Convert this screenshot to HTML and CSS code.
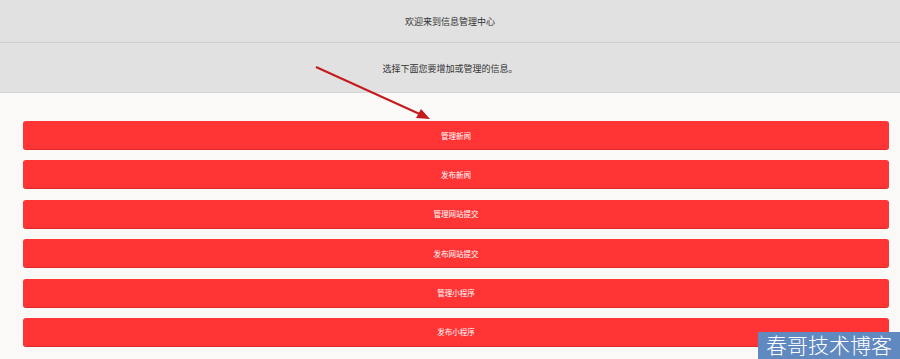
FILE: index.html
```html
<!DOCTYPE html>
<html lang="zh">
<head>
<meta charset="utf-8">
<title>信息管理中心</title>
<link rel="stylesheet" href="styles.css">
</head>
<body>
<header class="bar bar-title">欢迎来到信息管理中心</header>
<div class="bar bar-sub">选择下面您要增加或管理的信息。</div>
<main class="menu">
  <a class="btn" href="#">管理新闻</a>
  <a class="btn" href="#">发布新闻</a>
  <a class="btn" href="#">管理网站提交</a>
  <a class="btn" href="#">发布网站提交</a>
  <a class="btn" href="#">管理小程序</a>
  <a class="btn" href="#">发布小程序</a>
</main>
<svg class="arrow" width="900" height="359" viewBox="0 0 900 359">
  <line x1="316" y1="67" x2="424" y2="116" stroke="#c41a1e" stroke-width="2"/>
  <polygon points="430,119 416,118 421,109" fill="#c41a1e"/>
</svg>
<div class="watermark">春哥技术博客</div>
</body>
</html>
```
FILE: styles.css
```css
html, body {
  margin: 0;
  padding: 0;
}
body {
  width: 900px;
  height: 359px;
  overflow: hidden;
  background: #faf9f8;
  font-family: "Noto Sans CJK SC", "Noto Sans", sans-serif;
  position: relative;
}
.bar {
  background: #e1e1e1;
  color: #333;
  font-size: 9px;
  display: flex;
  align-items: center;
  justify-content: center;
}
.bar-title {
  height: 42px;
  border-bottom: 1px solid #cdcdcd;
}
.bar-sub {
  height: 48px;
  border-bottom: 1px solid #d6d6d6;
  padding-top: 1px;
}
.menu {
  display: flex;
  flex-direction: column;
  gap: 11.4px;
  padding: 28px 11px 0 23px;
}
.btn {
  display: flex;
  align-items: center;
  justify-content: center;
  height: 28px;
  background: #fe3435;
  border-radius: 3px;
  box-shadow: 0 1px 0 #e02a2b;
  color: #fff;
  font-size: 7.5px;
  text-decoration: none;
}
.arrow {
  position: absolute;
  left: 0;
  top: 0;
  pointer-events: none;
}
.watermark {
  position: absolute;
  left: 758px;
  top: 332px;
  width: 142px;
  height: 27px;
  background: #6089bf;
  color: #fff;
  font-family: "Noto Sans CJK SC", sans-serif;
  font-weight: 300;
  font-size: 21px;
  line-height: 25px;
  text-align: center;
  white-space: nowrap;
}
```
